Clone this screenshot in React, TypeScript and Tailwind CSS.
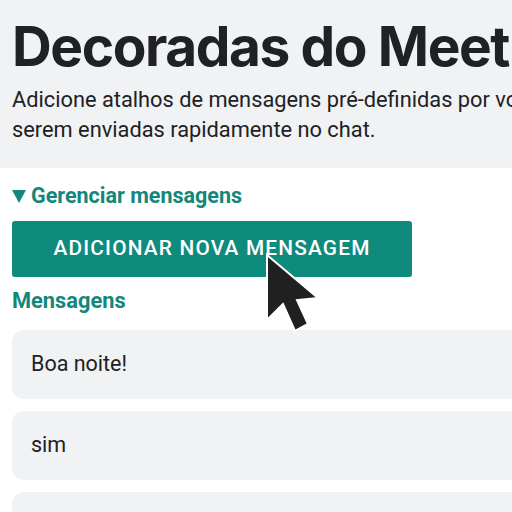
import React from "react";

export default function App() {
  return (
    <div className="w-[512px] h-[512px] overflow-hidden bg-white relative" style={{ fontFamily: "Roboto, 'Liberation Sans', sans-serif" }}>
      <div className="bg-[#f1f2f4] h-[168px] pl-[12px] pt-[14px] overflow-hidden">
        <h1 className="text-[55px] leading-[64px] font-bold text-[#202124] whitespace-nowrap tracking-[-1.4px]" style={{ fontFamily: "Inter, 'Liberation Sans', sans-serif" }}>
          Decoradas do Meet
        </h1>
        <p className="mt-[7px] text-[21.8px] leading-[30px] text-[#202124] w-[600px] whitespace-nowrap">
          Adicione atalhos de mensagens pré-definidas por você para
          <br />
          serem enviadas rapidamente no chat.
        </p>
      </div>
      <div className="px-[12px] pt-[16px]">
        <div className="flex items-center text-[#12877a] font-bold text-[21.5px] leading-[24px]">
          <svg width="14" height="13" viewBox="0 0 14 13" className="mr-[5px] mt-[1px]">
            <polygon points="0,0 14,0 7,13" fill="#12877a" />
          </svg>
          <span>Gerenciar mensagens</span>
        </div>
        <button className="mt-[13px] w-[400px] h-[56px] bg-[#0f8b7d] rounded-[3px] text-white font-medium text-[20.8px] tracking-[1.2px] flex items-center justify-center">
          ADICIONAR NOVA MENSAGEM
        </button>
        <div className="mt-[12px] text-[#12877a] font-bold text-[21.8px] leading-[24px]">Mensagens</div>
        <div className="mt-[17px] flex flex-col gap-[12px] w-[520px]">
          {["Boa noite!", "sim", ""].map((t, i) => (
            <div key={i} className="h-[69px] bg-[#f1f2f4] rounded-[12px] flex items-center pl-[19px] text-[21.5px] text-[#202124]">
              {t}
            </div>
          ))}
        </div>
      </div>
      <svg className="absolute left-0 top-0 pointer-events-none" width="512" height="512" viewBox="0 0 512 512">
        <path d="M267 255 L267 320 L283 304 L295 331 L308 324 L297 300 L318 298 Z" fill="#202020" stroke="white" strokeWidth="2" strokeLinejoin="miter" />
      </svg>
    </div>
  );
}
